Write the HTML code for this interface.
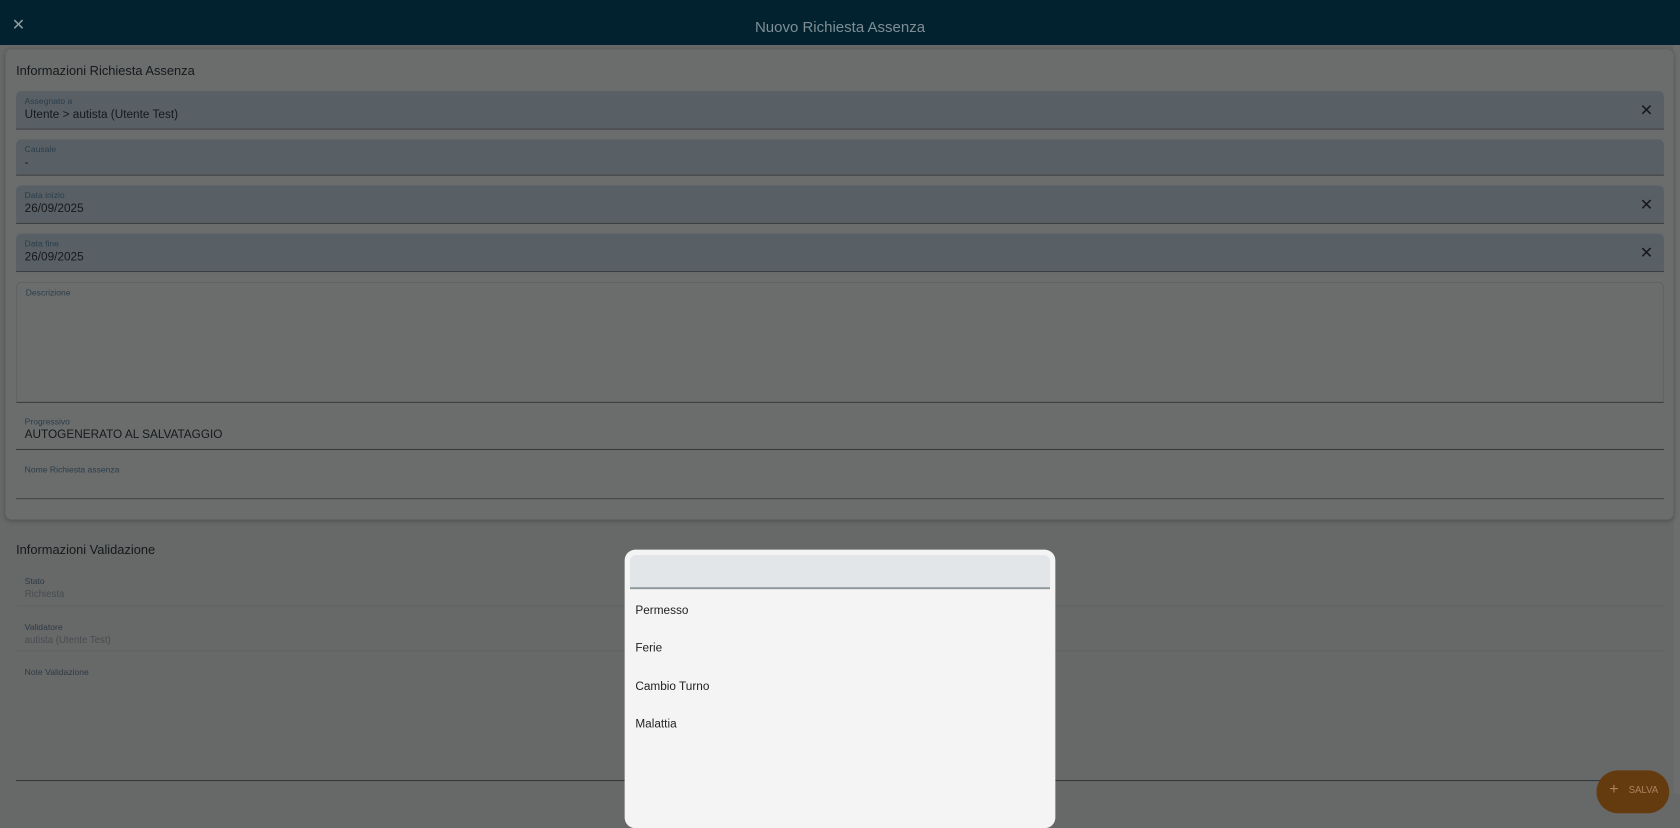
<!DOCTYPE html>
<html><head><meta charset="utf-8"><style>
html,body{margin:0;padding:0;width:1680px;height:794px;overflow:hidden;background:#676868;font-family:"Liberation Sans",sans-serif;}
#w{position:absolute;left:0;top:0;width:1568px;height:741px;transform:scale(1.07143);transform-origin:0 0;}
.a{position:absolute;}
.hdr{left:0;top:0;width:1568px;height:42px;background:#03222f;}
.card{background:#6b6d6d;border-radius:6px;box-shadow:0 1px 4px rgba(0,0,0,.25);}
.f{left:15px;width:1538px;background:#596065;border-bottom:1px solid #35383a;border-radius:5px 5px 0 0;}
.f.n{background:transparent;}
.lb{position:absolute;left:8px;top:5px;font-size:8px;color:#2a3d4a;}
.v{position:absolute;left:8px;top:16px;font-size:11px;color:#15181b;}
.x{position:absolute;right:10px;top:9px;font-size:15px;color:#15171a;}
.g{left:15px;width:1538px;border-bottom:1px solid #5f6263;}
.g .lb{left:8px;top:3px;color:#2d3a44}
.g .v{top:14px;font-size:9px;color:#484d51}
.it{position:absolute;left:10px;font-size:11px;color:#222;}
</style></head><body><div id="w">
<div class="a hdr"><div class="a" style="left:11px;top:14px;color:#8c9aa0;font-size:15px">✕</div>
<div class="a" style="left:0;width:1568px;top:17px;text-align:center;color:#7e8e95;font-size:14px">Nuovo Richiesta Assenza</div></div>
<div class="a" style="right:0;top:42px;width:6px;height:699px;background:#6c6d6d"></div>
<div class="a card" style="left:5px;top:46px;width:1557px;height:439px"></div>
<div class="a" style="left:15px;top:59px;font-size:12px;color:#15191c">Informazioni Richiesta Assenza</div>
<div class="a f" style="top:85px;height:35px"><div class="lb">Assegnato a</div><div class="v">Utente &gt; autista (Utente Test)</div><div class="x">✕</div></div>
<div class="a f" style="top:130px;height:33px"><div class="lb">Causale</div><div class="v">-</div></div>
<div class="a f" style="top:173px;height:35px"><div class="lb">Data inizio</div><div class="v">26/09/2025</div><div class="x">✕</div></div>
<div class="a f" style="top:218px;height:35px"><div class="lb">Data fine</div><div class="v">26/09/2025</div><div class="x">✕</div></div>
<div class="a f n" style="top:263px;height:111px;border:1px solid #5f6263;border-bottom:1px solid #333;width:1536px"><div class="lb">Descrizione</div></div>
<div class="a f n" style="top:384px;height:35px"><div class="lb">Progressivo</div><div class="v">AUTOGENERATO AL SALVATAGGIO</div></div>
<div class="a f n" style="top:429px;height:36px"><div class="lb">Nome Richiesta assenza</div></div>
<div class="a" style="left:15px;top:506px;font-size:12px;color:#15191c">Informazioni Validazione</div>
<div class="a g" style="top:535px;height:30px"><div class="lb">Stato</div><div class="v">Richiesta</div></div>
<div class="a g" style="top:578px;height:29px"><div class="lb">Validatore</div><div class="v">autista (Utente Test)</div></div>
<div class="a g" style="top:620px;height:108px;border-bottom-color:#35383a"><div class="lb">Note Validazione</div></div>
<div class="a" style="left:1490px;top:719px;width:68px;height:40px;border-radius:20px;background:#643a0f;color:#a8845f;font-size:9px"><span style="position:absolute;left:12px;top:9px;font-size:15px">+</span><span style="position:absolute;left:30px;top:13px">SALVA</span></div>
<div class="a" style="left:583px;top:513px;width:402px;height:260px;background:#f3f4f3;border-radius:10px">
<div class="a" style="left:5px;top:5px;width:392px;height:30px;background:#e2e6e8;border-bottom:2px solid #8e979c;border-radius:6px 6px 0 0"></div>
<div class="it" style="top:51px">Permesso</div>
<div class="it" style="top:86px">Ferie</div>
<div class="it" style="top:122px">Cambio Turno</div>
<div class="it" style="top:157px">Malattia</div>
</div>
</div></body></html>
